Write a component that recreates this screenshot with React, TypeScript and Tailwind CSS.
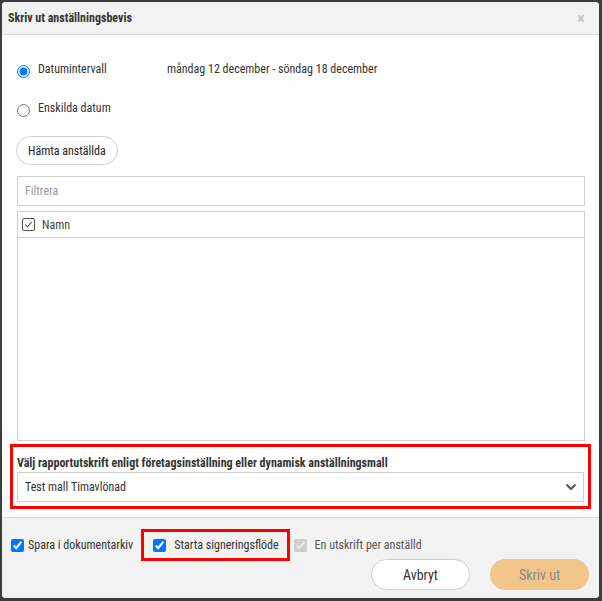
import React from "react";

const font = {
  fontFamily: '"Roboto Condensed", "Liberation Sans Narrow", "Roboto", sans-serif',
};

function CheckSquare() {
  return (
    <svg width="13" height="13" viewBox="0 0 13 13" className="shrink-0">
      <rect x="0.5" y="0.5" width="12" height="12" rx="1.5" fill="none" stroke="#555" />
      <path d="M3.2 6.6 L5.4 8.8 L9.8 4.2" fill="none" stroke="#555" strokeWidth="1.1" />
    </svg>
  );
}

function Chevron() {
  return (
    <svg width="12" height="8" viewBox="0 0 12 8">
      <path d="M1.5 1.5 L6 6 L10.5 1.5" fill="none" stroke="#555" strokeWidth="2" />
    </svg>
  );
}

export default function App() {
  return (
    <div className="h-[601px] w-[602px] bg-[#3d3d3d] p-[2px]" style={font}>
      <div className="flex h-[596px] w-[597px] flex-col overflow-hidden rounded-[4px] bg-white text-[12px] leading-[16px] text-[#333]">
        {/* header */}
        <div className="flex h-[33px] shrink-0 items-center justify-between border-b border-[#dcdcdc] bg-[#f2f2f2] pl-[6px] pr-[14px]">
          <span className="text-[12px] font-bold text-[#333]">Skriv ut anställningsbevis</span>
          <span className="text-[17px] font-bold leading-none text-[#c4c4c4]">×</span>
        </div>

        {/* body */}
        <div className="flex flex-1 flex-col px-[14px]">
          <div className="mt-[26px] flex h-[20px] items-center">
            <input type="radio" defaultChecked className="m-0 ml-[1px] h-[13px] w-[13px]" name="r" />
            <span className="ml-[8px] w-[129px] -translate-y-[2px]">Datumintervall</span>
            <span className="-translate-y-[2px]">måndag 12 december - söndag 18 december</span>
          </div>
          <div className="mt-[19px] flex h-[20px] items-center">
            <input type="radio" className="m-0 ml-[1px] h-[13px] w-[13px]" name="r" />
            <span className="ml-[8px] -translate-y-[2px]">Enskilda datum</span>
          </div>
          <div className="mt-[16px]">
            <button className="h-[29px] rounded-full border border-[#cfcfcf] bg-white px-[11px] text-[12px] text-[#222]">
              Hämta anställda
            </button>
          </div>
          <div className="ml-[1px] mt-[11px] flex h-[30px] items-center border border-[#d0d0d0] px-[7px] text-[#999]">
            Filtrera
          </div>
          <div className="ml-[1px] mt-[5px] flex h-[230px] flex-col border border-[#d0d0d0]">
            <div className="flex h-[26px] items-center gap-[7px] border-b border-[#d0d0d0] pl-[4px] text-[#444]">
              <CheckSquare />
              <span>Namn</span>
            </div>
          </div>
          <div className="-mx-[6px] mt-[3px] border-[3px] border-[#ff0000] px-[4px] pb-[4px] pt-[8px]">
            <div className="text-[12px] font-bold leading-[16px] text-[#333]">
              Välj rapportutskrift enligt företagsinställning eller dynamisk anställningsmall
            </div>
            <div className="mt-[1px] flex h-[30px] items-center justify-between border border-[#d0d0d0] pl-[7px] pr-[6px] text-[#333]">
              <span>Test mall Timavlönad</span>
              <Chevron />
            </div>
          </div>
        </div>

        {/* footer */}
        <div className="flex h-[81px] shrink-0 flex-col border-t border-[#dcdcdc] bg-[#f2f2f2] px-[9px] pt-[11px]">
          <div className="flex items-center">
            <label className="flex items-center gap-[4px]">
              <input type="checkbox" defaultChecked className="m-0 h-[13px] w-[13px]" />
              <span>Spara i dokumentarkiv</span>
            </label>
            <label className="ml-[8px] flex h-[32px] items-center gap-[8px] border-[3px] border-[#ff0000] pl-[9px] pr-[8px]">
              <input type="checkbox" defaultChecked className="m-0 h-[13px] w-[13px]" />
              <span>Starta signeringsflöde</span>
            </label>
            <label className="ml-[4px] flex items-center gap-[8px] text-[#555]">
              <input type="checkbox" defaultChecked disabled className="m-0 h-[13px] w-[13px]" />
              <span>En utskrift per anställd</span>
            </label>
          </div>
          <div className="-mt-[2px] flex justify-end gap-[20px] pr-[1px]">
            <button className="h-[31px] w-[99px] rounded-full border border-[#cfcfcf] bg-white text-[14px] text-[#333]">
              Avbryt
            </button>
            <button className="h-[31px] w-[99px] rounded-full bg-[#f2c68b] text-[14px] text-[#888]">
              Skriv ut
            </button>
          </div>
        </div>
      </div>
    </div>
  );
}
